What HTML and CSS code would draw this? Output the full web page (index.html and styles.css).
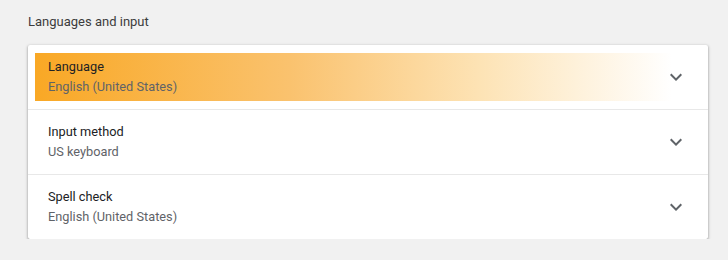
FILE: index.html
```html
<!DOCTYPE html>
<html>
<head>
<meta charset="utf-8">
<link rel="stylesheet" href="styles.css">
</head>
<body>
<div class="page">
  <h2 class="section-title">Languages and input</h2>
  <div class="card">
    <div class="row highlighted">
      <div class="row-text">
        <div class="primary">Language</div>
        <div class="secondary">English (United States)</div>
      </div>
      <svg class="chevron" viewBox="0 0 24 24" width="24" height="24"><path d="M16.59 8.59L12 13.17 7.41 8.59 6 10l6 6 6-6z"/></svg>
    </div>
    <div class="row">
      <div class="row-text">
        <div class="primary">Input method</div>
        <div class="secondary">US keyboard</div>
      </div>
      <svg class="chevron" viewBox="0 0 24 24" width="24" height="24"><path d="M16.59 8.59L12 13.17 7.41 8.59 6 10l6 6 6-6z"/></svg>
    </div>
    <div class="row">
      <div class="row-text">
        <div class="primary">Spell check</div>
        <div class="secondary">English (United States)</div>
      </div>
      <svg class="chevron" viewBox="0 0 24 24" width="24" height="24"><path d="M16.59 8.59L12 13.17 7.41 8.59 6 10l6 6 6-6z"/></svg>
    </div>
  </div>
</div>
</body>
</html>
```

FILE: styles.css
```css
html, body {
  margin: 0;
  padding: 0;
  background: #f1f1f1;
  font-family: Roboto, "Noto Sans", sans-serif;
  font-size: 13px;
}
.page {
  padding: 12px 20px 0 28px;
}
.section-title {
  margin: 0 0 13px 0;
  font-size: 13px;
  font-weight: 400;
  line-height: 20px;
  color: #3c3c3c;
}
.card {
  background: #fff;
  box-shadow: 0 1px 2px rgba(0,0,0,0.3), 0 1px 3px 1px rgba(0,0,0,0.12);
  border-radius: 2px;
}
.row {
  display: flex;
  align-items: center;
  height: 64px;
  padding: 0 20px 0 20px;
  border-top: 1px solid #e8e8e8;
  position: relative;
}
.row:first-child {
  border-top: none;
}
.row.highlighted::before {
  content: "";
  position: absolute;
  left: 7px;
  top: 8px;
  bottom: 8px;
  right: 36px;
  background: linear-gradient(to right, #f9a825 0%, #fac26e 40%, #fde3b5 70%, rgba(255,255,255,0) 100%);
}
.row-text {
  flex: 1;
  position: relative;
  font-size: 12.75px;
}
.primary {
  color: #202124;
  line-height: 20px;
}
.secondary {
  color: #5f6368;
  line-height: 20px;
}
.chevron {
  fill: #5f6368;
  position: relative;
}
```
